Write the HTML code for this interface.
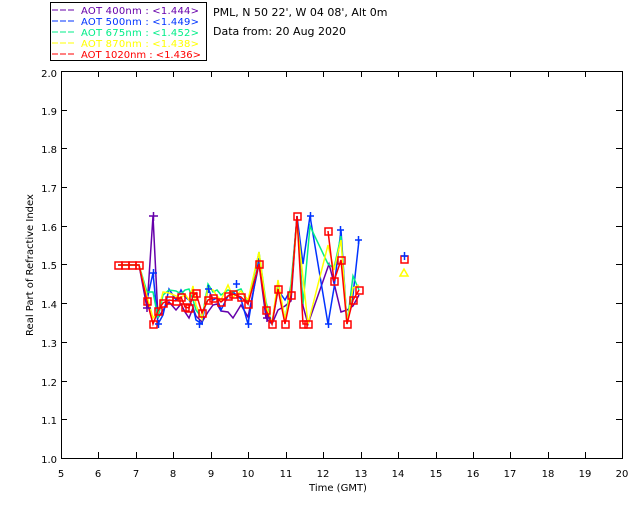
<!DOCTYPE html>
<html><head><style>
body{margin:0;background:#fff;width:640px;height:512px;overflow:hidden;font-family:"DejaVu Sans","Liberation Sans",sans-serif}
svg text{font-family:"DejaVu Sans","Liberation Sans",sans-serif;font-size:10px}
</style></head><body>
<svg width="640" height="512" viewBox="0 0 640 512">
<rect x="50.5" y="2.5" width="156" height="58" fill="none" stroke="#000"/>
<g stroke-width="1">
<line x1="52" y1="10" x2="76" y2="10" stroke="#6600aa" stroke-dasharray="6,2"/>
<line x1="52" y1="21" x2="76" y2="21" stroke="#0033ff" stroke-dasharray="6,2"/>
<line x1="52" y1="32" x2="76" y2="32" stroke="#00ee88" stroke-dasharray="6,2"/>
<line x1="52" y1="43" x2="76" y2="43" stroke="#ffff00" stroke-dasharray="6,2"/>
<line x1="52" y1="54" x2="76" y2="54" stroke="#ff0000" stroke-dasharray="6,2"/>
</g>
<g font-size="11" style="font-size:11px">
<text x="81" y="14" fill="#6600aa" textLength="118">AOT  400nm : &lt;1.444&gt;</text>
<text x="81" y="25" fill="#0033ff" textLength="118">AOT  500nm : &lt;1.449&gt;</text>
<text x="81" y="36" fill="#00ee88" textLength="118">AOT  675nm : &lt;1.452&gt;</text>
<text x="81" y="47" fill="#ffff00" textLength="118">AOT  870nm : &lt;1.438&gt;</text>
<text x="81" y="58" fill="#ff0000" textLength="120">AOT 1020nm : &lt;1.436&gt;</text>
<text x="213" y="16" fill="#000" style="font-size:11px">PML, N 50 22', W 04 08', Alt 0m</text>
<text x="213" y="35" fill="#000" style="font-size:11px">Data from: 20 Aug 2020</text>
</g>
<rect x="61.5" y="71.5" width="561" height="387" fill="none" stroke="#000"/>
<g stroke="#000">
<path d="M98.5 71v6M136.5 71v6M173.5 71v6M211.5 71v6M248.5 71v6M286.5 71v6M323.5 71v6M361.5 71v6M398.5 71v6M436.5 71v6M473.5 71v6M510.5 71v6M548.5 71v6M585.5 71v6"/>
<path d="M98.5 458v-6M136.5 458v-6M173.5 458v-6M211.5 458v-6M248.5 458v-6M286.5 458v-6M323.5 458v-6M361.5 458v-6M398.5 458v-6M436.5 458v-6M473.5 458v-6M510.5 458v-6M548.5 458v-6M585.5 458v-6"/>
<path d="M61 110.5h6M61 148.5h6M61 187.5h6M61 226.5h6M61 264.5h6M61 303.5h6M61 342.5h6M61 381.5h6M61 419.5h6"/>
<path d="M622 110.5h-6M622 148.5h-6M622 187.5h-6M622 226.5h-6M622 264.5h-6M622 303.5h-6M622 342.5h-6M622 381.5h-6M622 419.5h-6"/>
</g>
<g fill="#000" text-anchor="end">
<text x="57" y="77">2.0</text><text x="57" y="115">1.9</text><text x="57" y="153">1.8</text><text x="57" y="192">1.7</text><text x="57" y="231">1.6</text><text x="57" y="269">1.5</text><text x="57" y="308">1.4</text><text x="57" y="347">1.3</text><text x="57" y="386">1.2</text><text x="57" y="424">1.1</text><text x="57" y="463">1.0</text>
</g>
<g fill="#000" text-anchor="middle">
<text x="61" y="477">5</text><text x="98" y="477">6</text><text x="136" y="477">7</text><text x="173" y="477">8</text><text x="211" y="477">9</text><text x="248" y="477">10</text><text x="286" y="477">11</text><text x="323" y="477">12</text><text x="361" y="477">13</text><text x="398" y="477">14</text><text x="436" y="477">15</text><text x="473" y="477">16</text><text x="510" y="477">17</text><text x="548" y="477">18</text><text x="585" y="477">19</text><text x="622" y="477">20</text>
<text x="338" y="491">Time (GMT)</text>
<text transform="translate(33,265) rotate(-90)">Real Part of Refractive Index</text>
</g>
<g fill="none" stroke-width="1.5">
<polyline stroke="#6600aa" points="118,265 139,265 147,308 153,216 158,318 163,310 169,302 176,310 181,304 185,312 189,318 193,308 196,316 202,322 208,312 213,305 217,304 221,311 228,312 233,318 241,305 248,317 259,264 266,318 272,324 278,310 285,306 291,301 297,216 303,306 308,324 329,264 334,283 341,312 347,310 353,306 359,295"/>
<polyline stroke="#0033ff" points="118,265 139,265 147,300 153,273 158,324 163,315 169,289 176,300 181,290 185,297 189,300 193,307 196,320 202,324 208,288 213,300 217,298 221,310 228,296 233,292 241,299 248,324 259,258 266,312 272,324 278,290 285,300 291,289 297,216 303,264 310,216 328,324 334,288 341,230 347,324 353,295 359,240"/>
<polyline stroke="#00ee88" points="118,265 139,265 147,292 153,292 158,318 163,295 169,290 176,291 181,294 185,290 189,289 193,300 196,310 202,318 208,284 213,292 217,290 221,295 228,290 233,292 241,289 248,304 259,252 266,302 272,324 278,282 285,320 291,284 297,218 303,304 310,226 328,264 334,268 341,236 347,324 353,276 359,290"/>
<polyline stroke="#ffff00" points="118,265 139,265 147,296 153,318 158,312 163,292 169,293 176,296 181,298 185,294 189,300 193,286 196,305 202,319 208,288 213,290 217,296 221,300 228,285 233,297 241,291 248,300 259,252 266,305 272,324 278,280 285,320 291,290 297,222 303,278 308,324 328,245 334,270 341,240 347,324 353,288 359,285"/>
<polyline stroke="#ff0000" points="118,265 139,265 147,301 153,324 158,311 163,303 169,300 176,301 181,297 185,307 189,308 193,296 196,293 202,313 208,300 213,298 217,298 221,302 228,296 233,294 241,297 248,304 259,264 266,310 272,324 278,289 285,324 291,295 297,216 303,324 308,324"/>
<polyline stroke="#ff0000" points="328,231 334,281 341,260 347,324 353,300 359,290"/>
</g>
<g fill="none" stroke="#ff0000" stroke-width="1.5">
<rect x="115" y="262" width="7" height="7"/><rect x="122" y="262" width="7" height="7"/><rect x="129" y="262" width="7" height="7"/><rect x="136" y="262" width="7" height="7"/>
<rect x="144" y="298" width="7" height="7"/><rect x="150" y="321" width="7" height="7"/><rect x="155" y="308" width="7" height="7"/><rect x="160" y="300" width="7" height="7"/><rect x="166" y="297" width="7" height="7"/><rect x="173" y="298" width="7" height="7"/><rect x="178" y="294" width="7" height="7"/><rect x="182" y="304" width="7" height="7"/><rect x="186" y="305" width="7" height="7"/><rect x="190" y="293" width="7" height="7"/><rect x="193" y="290" width="7" height="7"/><rect x="199" y="310" width="7" height="7"/><rect x="205" y="297" width="7" height="7"/><rect x="210" y="295" width="7" height="7"/><rect x="218" y="299" width="7" height="7"/><rect x="225" y="293" width="7" height="7"/><rect x="230" y="291" width="7" height="7"/><rect x="238" y="294" width="7" height="7"/><rect x="245" y="301" width="7" height="7"/><rect x="256" y="261" width="7" height="7"/><rect x="263" y="307" width="7" height="7"/><rect x="269" y="321" width="7" height="7"/><rect x="275" y="286" width="7" height="7"/><rect x="282" y="321" width="7" height="7"/><rect x="288" y="292" width="7" height="7"/><rect x="294" y="213" width="7" height="7"/><rect x="300" y="321" width="7" height="7"/><rect x="305" y="321" width="7" height="7"/><rect x="325" y="228" width="7" height="7"/><rect x="331" y="278" width="7" height="7"/><rect x="338" y="257" width="7" height="7"/><rect x="344" y="321" width="7" height="7"/><rect x="350" y="297" width="7" height="7"/><rect x="356" y="287" width="7" height="7"/><rect x="401" y="256" width="7" height="7"/>
</g>
<g stroke="#0033ff" stroke-width="1.5">
<path d="M150 273h7M153.5 269v8M155 324h7M158.5 320v8M205 289h7M208.5 285v8M233 284h7M236.5 280v8M245 324h7M248.5 320v8M307 216h7M310.5 212v8M325 324h7M328.5 320v8M337 230h7M340.5 226v8M355 240h7M358.5 236v8M401 256h7M404.5 252v8M196 324h7M199.5 320v8"/>
</g>
<g stroke="#6600aa" stroke-width="1.5">
<path d="M149 216h9M153.5 212v9M143 308h8M147 304v8M263 318h8M267 314v8"/>
</g>
<g fill="none" stroke="#ffff00" stroke-width="1.5"><path d="M400 276l4-7 4 7z"/></g>
</svg>
</body></html>
